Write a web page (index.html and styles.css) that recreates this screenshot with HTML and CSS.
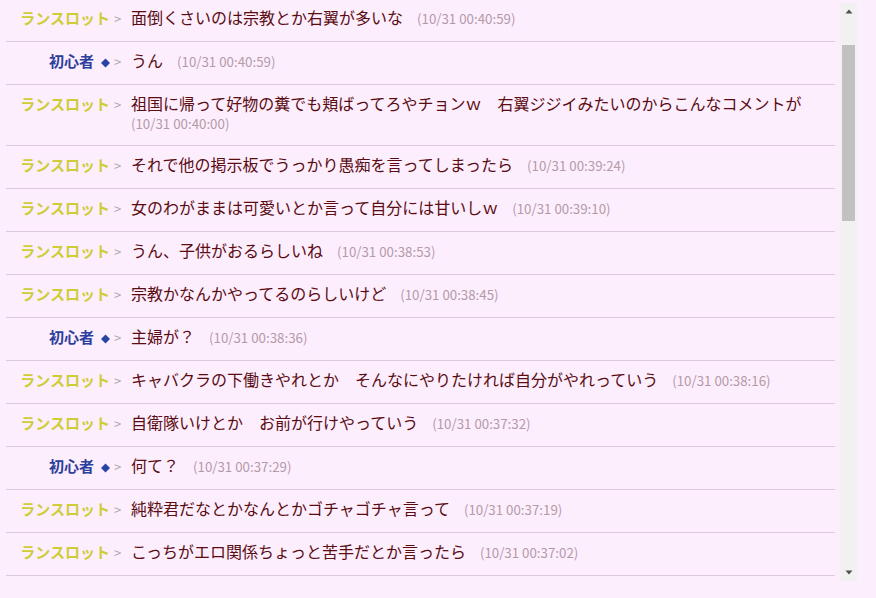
FILE: index.html
```html
<!DOCTYPE html>
<html lang="ja">
<head>
<meta charset="utf-8">
<title>log</title>
<link rel="stylesheet" href="styles.css">
</head>
<body>
<div class="frame">
  <div class="list">
    <div class="rows">
      <div class="row"><div class="name lan">ランスロット</div><div class="gt">&gt;</div><div class="body"><span class="msg">面倒くさいのは宗教とか右翼が多いな</span><span class="time">(10/31 00:40:59)</span></div></div>
      <div class="row"><div class="name sho">初心者<svg class="dia" width="9" height="10" viewBox="0 0 9 10"><path d="M4.5 0.5 L9 5 L4.5 9.5 L0 5 Z" fill="#2a44a3"/></svg></div><div class="gt">&gt;</div><div class="body"><span class="msg">うん</span><span class="time">(10/31 00:40:59)</span></div></div>
      <div class="row tall"><div class="name lan">ランスロット</div><div class="gt">&gt;</div><div class="body"><span class="msg">祖国に帰って好物の糞でも頬ばってろやチョンｗ　右翼ジジイみたいのからこんなコメントが</span><span class="time">(10/31 00:40:00)</span></div></div>
      <div class="row"><div class="name lan">ランスロット</div><div class="gt">&gt;</div><div class="body"><span class="msg">それで他の掲示板でうっかり愚痴を言ってしまったら</span><span class="time">(10/31 00:39:24)</span></div></div>
      <div class="row"><div class="name lan">ランスロット</div><div class="gt">&gt;</div><div class="body"><span class="msg">女のわがままは可愛いとか言って自分には甘いしｗ</span><span class="time">(10/31 00:39:10)</span></div></div>
      <div class="row"><div class="name lan">ランスロット</div><div class="gt">&gt;</div><div class="body"><span class="msg">うん、子供がおるらしいね</span><span class="time">(10/31 00:38:53)</span></div></div>
      <div class="row"><div class="name lan">ランスロット</div><div class="gt">&gt;</div><div class="body"><span class="msg">宗教かなんかやってるのらしいけど</span><span class="time">(10/31 00:38:45)</span></div></div>
      <div class="row"><div class="name sho">初心者<svg class="dia" width="9" height="10" viewBox="0 0 9 10"><path d="M4.5 0.5 L9 5 L4.5 9.5 L0 5 Z" fill="#2a44a3"/></svg></div><div class="gt">&gt;</div><div class="body"><span class="msg">主婦が？</span><span class="time">(10/31 00:38:36)</span></div></div>
      <div class="row"><div class="name lan">ランスロット</div><div class="gt">&gt;</div><div class="body"><span class="msg">キャバクラの下働きやれとか　そんなにやりたければ自分がやれっていう</span><span class="time">(10/31 00:38:16)</span></div></div>
      <div class="row"><div class="name lan">ランスロット</div><div class="gt">&gt;</div><div class="body"><span class="msg">自衛隊いけとか　お前が行けやっていう</span><span class="time">(10/31 00:37:32)</span></div></div>
      <div class="row"><div class="name sho">初心者<svg class="dia" width="9" height="10" viewBox="0 0 9 10"><path d="M4.5 0.5 L9 5 L4.5 9.5 L0 5 Z" fill="#2a44a3"/></svg></div><div class="gt">&gt;</div><div class="body"><span class="msg">何て？</span><span class="time">(10/31 00:37:29)</span></div></div>
      <div class="row"><div class="name lan">ランスロット</div><div class="gt">&gt;</div><div class="body"><span class="msg">純粋君だなとかなんとかゴチャゴチャ言って</span><span class="time">(10/31 00:37:19)</span></div></div>
      <div class="row"><div class="name lan">ランスロット</div><div class="gt">&gt;</div><div class="body"><span class="msg">こっちがエロ関係ちょっと苦手だとか言ったら</span><span class="time">(10/31 00:37:02)</span></div></div>
    </div>
  </div>
  <div class="scroll">
    <div class="btn"><svg width="8" height="5" viewBox="0 0 8 5"><path d="M0.5 4.5 L4 0.5 L7.5 4.5 Z" fill="#505050"/></svg></div>
    <div class="thumb"></div>
    <div class="fill"></div>
    <div class="btn"><svg width="8" height="5" viewBox="0 0 8 5"><path d="M0.5 0.5 L7.5 0.5 L4 4.5 Z" fill="#505050"/></svg></div>
  </div>
</div>
</body>
</html>
```

FILE: styles.css
```css
html, body {
  margin: 0;
  padding: 0;
  background: #fdeefd;
}

body {
  font-family: "Noto Sans CJK JP", "Noto Sans", sans-serif;
}

.frame {
  display: flex;
  width: 857px;
  height: 578px;
  margin-top: 3px;
}

.list {
  flex: 1;
  overflow: hidden;
  padding: 0 5px 0 6px;
}

.rows {
  margin-top: -4px;
}

.row {
  display: flex;
  align-items: baseline;
  height: 42px;
  border-bottom: 1px solid #dccadc;
}

.row.tall {
  height: 60px;
}

.name,
.gt,
.body {
  margin-top: 6px;
}

.name {
  flex: 0 0 104px;
  text-align: right;
  font-size: 15px;
  font-weight: bold;
  line-height: 22px;
  white-space: nowrap;
}

.lan {
  color: #cdcd35;
}

.sho {
  color: #2c3f9c;
}

.dia {
  vertical-align: -1px;
  margin-left: 7px;
}

.gt {
  flex: 0 0 21px;
  box-sizing: border-box;
  padding-left: 4px;
  color: #aaaaaa;
  font-size: 13px;
  line-height: 18px;
}

.body {
  flex: 1;
  display: flex;
  flex-wrap: wrap;
  align-items: baseline;
}

.msg {
  font-size: 16px;
  line-height: 24px;
  color: #5a0c12;
  margin-right: 14px;
}

.time {
  font-size: 13.3px;
  line-height: 18px;
  color: #b39aa8;
  white-space: nowrap;
}

.scroll {
  width: 17px;
  background: #f1f1f1;
  display: flex;
  flex-direction: column;
  align-items: center;
}

.btn {
  height: 17px;
  width: 17px;
  display: flex;
  align-items: center;
  justify-content: center;
}

.thumb {
  margin-top: 25px;
  width: 13px;
  height: 176px;
  background: #c1c1c1;
}

.fill {
  flex: 1;
}
```
